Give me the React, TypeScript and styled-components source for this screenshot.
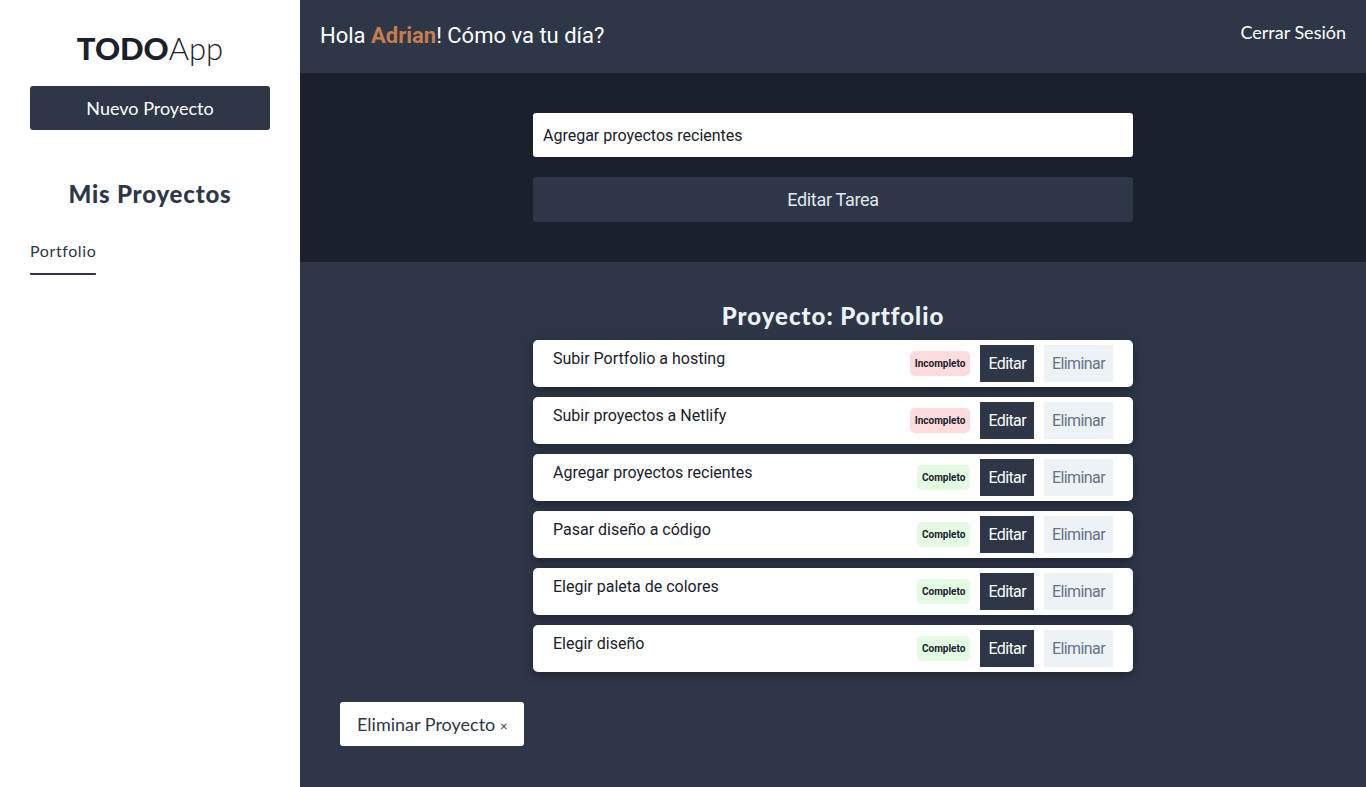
import React from "react";
import styled, { createGlobalStyle } from "styled-components";

const Global = createGlobalStyle`
  * { box-sizing: border-box; }
  html, body { margin: 0; padding: 0; height: 100%; }
  body { font-family: Roboto, "Liberation Sans", sans-serif; }
  #root { min-height: 100vh; }
`;

const DISPLAY = `Lato, "Open Sans", sans-serif`;

const Layout = styled.div`
  display: flex;
  min-height: 100vh;
`;

const Sidebar = styled.aside`
  width: 300px;
  flex-shrink: 0;
  background: #ffffff;
  padding: 30px 30px;
  display: flex;
  flex-direction: column;
`;

const Logo = styled.h1`
  margin: 0;
  text-align: center;
  font-family: ${DISPLAY};
  font-size: 31px;
  line-height: 36px;
  color: #1a202c;
  font-weight: 300;
  span { font-weight: 900; }
`;

const NewButton = styled.button`
  margin-top: 20px;
  height: 44px;
  width: 100%;
  border: none;
  border-radius: 3px;
  background: #2d3748;
  color: #ffffff;
  font-family: ${DISPLAY};
  font-size: 18px;
  cursor: pointer;
`;

const SideTitle = styled.h2`
  margin: 49px 0 0;
  text-align: center;
  font-family: ${DISPLAY};
  font-weight: 900;
  font-size: 24px;
  line-height: 30px;
  letter-spacing: 0.8px;
  color: #2d3748;
`;

const ProjectList = styled.ul`
  list-style: none;
  margin: 32px 0 0;
  padding: 0;
`;

const ProjectLink = styled.li`
  display: inline-block;
  font-family: ${DISPLAY};
  font-size: 16px;
  line-height: 20px;
  letter-spacing: 0.6px;
  color: #2d3748;
  padding-bottom: 12px;
  border-bottom: 2px solid #2d3748;
  border-radius: 1px;
`;

const Main = styled.main`
  flex: 1;
  display: flex;
  flex-direction: column;
  background: #2d3748;
`;

const Header = styled.header`
  height: 73px;
  display: flex;
  justify-content: space-between;
  align-items: flex-start;
  padding: 0 20px;
  background: #2d3748;
`;

const Greeting = styled.p`
  margin: 23px 0 0;
  color: #ffffff;
  font-size: 22px;
  line-height: 26px;
  b { color: #c77d4d; font-weight: 700; }
`;

const Logout = styled.button`
  margin-top: 21px;
  background: none;
  border: none;
  padding: 0;
  color: #ffffff;
  font-family: ${DISPLAY};
  font-size: 18px;
  cursor: pointer;
`;

const FormArea = styled.section`
  background: #1a202c;
  padding: 40px 0;
  display: flex;
  flex-direction: column;
  align-items: center;
  gap: 20px;
`;

const Input = styled.input`
  width: 600px;
  height: 44px;
  border: none;
  border-radius: 3px;
  padding: 0 10px;
  font-family: Roboto, sans-serif;
  font-size: 16px;
  color: #1a202c;
  outline: none;
`;

const SubmitButton = styled.button`
  width: 600px;
  height: 45px;
  border: none;
  border-radius: 3px;
  background: #2d3748;
  color: #e2e8f0;
  font-family: Roboto, sans-serif;
  font-size: 18px;
  letter-spacing: -0.3px;
  cursor: pointer;
`;

const Listing = styled.section`
  flex: 1;
  padding: 40px 0 40px;
  display: flex;
  flex-direction: column;
`;

const ListingTitle = styled.h2`
  margin: 0 0 10px;
  text-align: center;
  font-family: ${DISPLAY};
  font-weight: 900;
  font-size: 24px;
  line-height: 28px;
  letter-spacing: 1px;
  color: #edf2f7;
`;

const Tasks = styled.ul`
  list-style: none;
  margin: 0 auto;
  padding: 0;
  width: 600px;
  display: flex;
  flex-direction: column;
  gap: 10px;
`;

const Task = styled.li`
  height: 47px;
  background: #ffffff;
  border-radius: 5px;
  box-shadow: 0 3px 10px rgba(0, 0, 0, 0.35);
  display: flex;
  align-items: flex-start;
  padding: 0 20px;
`;

const TaskName = styled.p`
  flex: 1;
  margin: 9px 0 0;
  font-size: 16px;
  line-height: 19px;
  color: #1a202c;
`;

const Actions = styled.div`
  display: flex;
  align-items: center;
  gap: 10px;
  margin-top: 5px;
`;

const Badge = styled.span<{ $done: boolean }>`
  padding: 0 5px;
  height: 25px;
  line-height: 25px;
  border-radius: 5px;
  font-size: 10px;
  font-weight: 700;
  color: #1a202c;
  background: ${(p) => (p.$done ? "#e3fbe1" : "#fedcdc")};
`;

const ActionBtn = styled.button<{ $variant: "edit" | "delete" }>`
  height: 37px;
  padding: 0 8px;
  border: none;
  background: ${(p) => (p.$variant === "edit" ? "#2d3748" : "#edf2f7")};
  color: ${(p) => (p.$variant === "edit" ? "#ffffff" : "#687385")};
  font-family: Roboto, sans-serif;
  font-size: 16px;
  letter-spacing: -0.6px;
  cursor: pointer;
`;

const Footer = styled.div`
  padding: 30px 40px 0;
`;

const DeleteProject = styled.button`
  height: 44px;
  padding: 0 17px;
  border: none;
  border-radius: 3px;
  background: #ffffff;
  color: #2d3748;
  font-family: ${DISPLAY};
  font-size: 18px;
  cursor: pointer;
  small { font-size: 13px; }
`;

const tasks = [
  { name: "Subir Portfolio a hosting", done: false },
  { name: "Subir proyectos a Netlify", done: false },
  { name: "Agregar proyectos recientes", done: true },
  { name: "Pasar diseño a código", done: true },
  { name: "Elegir paleta de colores", done: true },
  { name: "Elegir diseño", done: true },
];

export default function App() {
  return (
    <>
      <Global />
      <Layout>
        <Sidebar>
          <Logo>
            <span>TODO</span>App
          </Logo>
          <NewButton>Nuevo Proyecto</NewButton>
          <SideTitle>Mis Proyectos</SideTitle>
          <ProjectList>
            <ProjectLink>Portfolio</ProjectLink>
          </ProjectList>
        </Sidebar>
        <Main>
          <Header>
            <Greeting>
              Hola <b>Adrian</b>! Cómo va tu día?
            </Greeting>
            <Logout>Cerrar Sesión</Logout>
          </Header>
          <FormArea>
            <Input defaultValue="Agregar proyectos recientes" />
            <SubmitButton>Editar Tarea</SubmitButton>
          </FormArea>
          <Listing>
            <ListingTitle>Proyecto: Portfolio</ListingTitle>
            <Tasks>
              {tasks.map((t) => (
                <Task key={t.name}>
                  <TaskName>{t.name}</TaskName>
                  <Actions>
                    <Badge $done={t.done}>{t.done ? "Completo" : "Incompleto"}</Badge>
                    <ActionBtn $variant="edit">Editar</ActionBtn>
                    <ActionBtn $variant="delete">Eliminar</ActionBtn>
                  </Actions>
                </Task>
              ))}
            </Tasks>
            <Footer>
              <DeleteProject>
                Eliminar Proyecto <small>×</small>
              </DeleteProject>
            </Footer>
          </Listing>
        </Main>
      </Layout>
    </>
  );
}
